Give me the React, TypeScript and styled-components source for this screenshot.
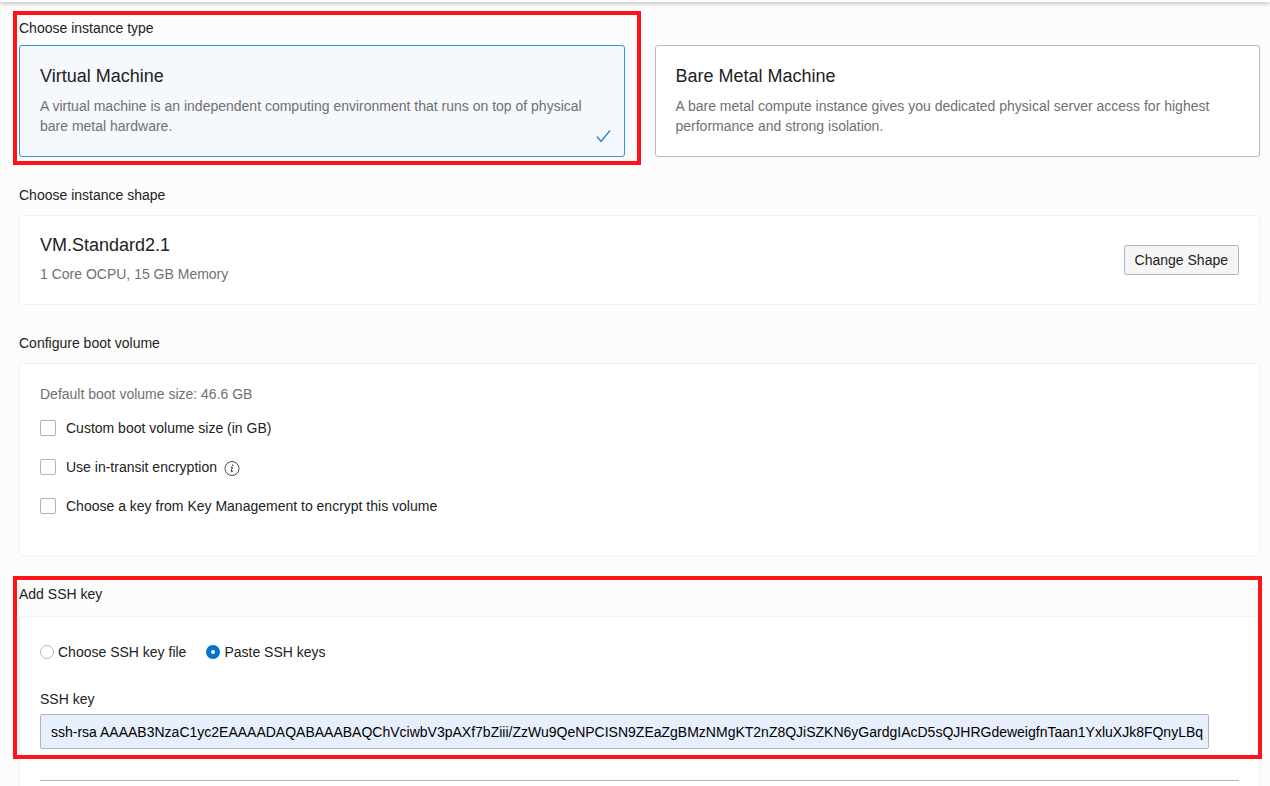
import React, { useState } from "react";
import styled, { createGlobalStyle } from "styled-components";

const GlobalStyle = createGlobalStyle`
  *, *::before, *::after { box-sizing: border-box; }
  body {
    margin: 0;
    background: #fcfcfc;
    color: #222;
    font: 14px/20px "Liberation Sans", Arial, sans-serif;
  }
`;

const Page = styled.div`
  min-height: 100vh;
  display: flex;
  flex-direction: column;
`;

const TopBar = styled.header`
  height: 2px;
  background: #fff;
  box-shadow: 0 1px 4px rgba(0, 0, 0, 0.45);
`;

const Form = styled.form`
  flex: 1;
  display: flex;
  flex-direction: column;
  gap: 28px;
  padding: 16px 10px 0 19px;
`;

const Section = styled.section<{ $grow?: boolean }>`
  position: relative;
  display: flex;
  flex-direction: column;
  flex: ${(p) => (p.$grow ? "1" : "none")};
  gap: ${(p) => (p.$grow ? 12 : 10)}px;
`;

const TypeGrid = styled.section`
  position: relative;
  display: grid;
  grid-template-columns: 1fr 1fr;
  gap: 7px 30px;
`;

const Heading = styled.h2`
  margin: 0;
  font-size: 14px;
  line-height: 20px;
  font-weight: 400;
`;

const Title = styled.span`
  display: block;
  font-size: 18px;
  line-height: 20px;
`;

const Muted = styled.span`
  display: block;
  color: #707070;
`;

const TypeCard = styled.button<{ $selected: boolean }>`
  position: relative;
  grid-row: 2;
  display: flex;
  flex-direction: column;
  gap: 10px;
  padding: 20px;
  text-align: left;
  font: inherit;
  color: inherit;
  border: 1px solid ${(p) => (p.$selected ? "#2f93e6" : "#b4b9c2")};
  border-radius: 3px;
  background: ${(p) => (p.$selected ? "#f5f8fd" : "#fff")};
`;

const Check = styled.svg`
  position: absolute;
  right: 12px;
  bottom: 13px;
`;

const highlightBorder = "4px solid #fe1318";

const TypeHighlight = styled.div`
  position: absolute;
  grid-area: 1 / 1 / 3 / 2;
  inset: -7px -16px -8px -6px;
  border: ${highlightBorder};
  pointer-events: none;
`;

const KeyHighlight = styled.div`
  position: absolute;
  inset: -8px -2px auto -6px;
  height: 183px;
  border: ${highlightBorder};
  pointer-events: none;
`;

const Panel = styled.div`
  padding: 20px;
  background: #fff;
  border: 1px solid #f2f2f2;
  border-radius: 3px;
`;

const ShapePanel = styled(Panel)`
  display: flex;
  align-items: center;
  justify-content: space-between;
  padding-top: 19px;
`;

const ShapeInfo = styled.div`
  display: flex;
  flex-direction: column;
  gap: 9px;
`;

const Button = styled.button`
  height: 30px;
  padding: 0 10px;
  font: inherit;
  color: inherit;
  background: #f5f5f5;
  border: 1px solid #b0b6c0;
  border-radius: 2px;
`;

const BootPanel = styled(Panel)`
  padding-bottom: 39px;
`;

const Options = styled.div`
  display: flex;
  flex-direction: column;
  gap: 19px;
  margin-top: 14px;
`;

const OptionRow = styled.div`
  display: flex;
  align-items: center;
  gap: 7px;
`;

const CheckLabel = styled.label`
  display: flex;
  align-items: center;
  gap: 10px;
`;

const Checkbox = styled.input`
  appearance: none;
  width: 16px;
  height: 16px;
  margin: 0;
  background: #fff;
  border: 1px solid #aeb4be;
  border-radius: 2px;
  &:checked { background: #0572ce; }
`;

const KeyPanel = styled(Panel)`
  flex: 1;
  padding: 25px 20px 5px;
  border-bottom: 0;
  border-radius: 3px 3px 0 0;
`;

const RadioRow = styled.div`
  display: flex;
  gap: 20px;
`;

const RadioLabel = styled.label`
  display: flex;
  align-items: center;
  gap: 4px;
`;

const Radio = styled.input`
  appearance: none;
  width: 14px;
  height: 14px;
  margin: 0;
  background: #fff;
  border: 1px solid #b4b9c2;
  border-radius: 50%;
  &:checked { border: 5px solid #0572ce; }
`;

const Field = styled.div`
  display: flex;
  flex-direction: column;
  gap: 5px;
  margin: 27px 30px 0 0;
`;

const KeyInput = styled.input`
  width: 100%;
  height: 35px;
  padding: 0 2px 0 10px;
  font: inherit;
  color: #000;
  background: #e8effc;
  border: 1px solid #aeb5bf;
  border-radius: 2px;
`;

const Divider = styled.hr`
  margin: 31px 0 0;
  border: 0;
  border-top: 1px solid #b0b5bd;
`;

const types = [
  {
    title: "Virtual Machine",
    text: "A virtual machine is an independent computing environment that runs on top of physical bare metal hardware.",
  },
  {
    title: "Bare Metal Machine",
    text: "A bare metal compute instance gives you dedicated physical server access for highest performance and strong isolation.",
  },
];

const bootOptions = [
  { label: "Custom boot volume size (in GB)" },
  { label: "Use in-transit encryption", info: true },
  { label: "Choose a key from Key Management to encrypt this volume" },
];

const InfoIcon = () => (
  <svg width="16" height="18" viewBox="0 0 16 18" fill="none" stroke="#333" aria-hidden="true">
    <circle cx="8" cy="10.5" r="7" strokeWidth=".9" />
    <path d="M6.8 9.3h1.6L7.3 13.2q-.1.8.6.5l.9-.5" />
    <circle cx="8.7" cy="7.2" r=".8" fill="#333" stroke="none" />
  </svg>
);

export default function App() {
  const [type, setType] = useState(0);
  const [source, setSource] = useState("paste");
  const [sshKey, setSshKey] = useState(
    "ssh-rsa AAAAB3NzaC1yc2EAAAADAQABAAABAQChVciwbV3pAXf7bZiii/ZzWu9QeNPCISN9ZEaZgBMzNMgKT2nZ8QJiSZKN6yGardgIAcD5sQJHRGdeweigfnTaan1YxluXJk8FQnyLBq"
  );

  return (
    <Page>
      <GlobalStyle />
      <TopBar />
      <Form>
        <TypeGrid>
          <Heading>Choose instance type</Heading>
          {types.map((t, i) => (
            <TypeCard key={t.title} type="button" $selected={i === type} aria-pressed={i === type} onClick={() => setType(i)}>
              <Title>{t.title}</Title>
              <Muted>{t.text}</Muted>
              {i === type && (
                <Check width="16" height="14" viewBox="0 0 16 14" fill="none" stroke="#1f85d6" strokeWidth="1.3" aria-hidden="true">
                  <path d="M1 7.5 5 12.5 14 1.5" />
                </Check>
              )}
            </TypeCard>
          ))}
          <TypeHighlight />
        </TypeGrid>

        <Section>
          <Heading>Choose instance shape</Heading>
          <ShapePanel>
            <ShapeInfo>
              <Title>VM.Standard2.1</Title>
              <Muted>1 Core OCPU, 15 GB Memory</Muted>
            </ShapeInfo>
            <Button type="button">Change Shape</Button>
          </ShapePanel>
        </Section>

        <Section>
          <Heading>Configure boot volume</Heading>
          <BootPanel>
            <Muted>Default boot volume size: 46.6 GB</Muted>
            <Options>
              {bootOptions.map((o) => (
                <OptionRow key={o.label}>
                  <CheckLabel>
                    <Checkbox type="checkbox" />
                    {o.label}
                  </CheckLabel>
                  {o.info && <InfoIcon />}
                </OptionRow>
              ))}
            </Options>
          </BootPanel>
        </Section>

        <Section $grow>
          <Heading>Add SSH key</Heading>
          <KeyPanel>
            <RadioRow>
              <RadioLabel>
                <Radio type="radio" name="source" checked={source === "file"} onChange={() => setSource("file")} />
                Choose SSH key file
              </RadioLabel>
              <RadioLabel>
                <Radio type="radio" name="source" checked={source === "paste"} onChange={() => setSource("paste")} />
                Paste SSH keys
              </RadioLabel>
            </RadioRow>
            <Field>
              <label htmlFor="ssh-key">SSH key</label>
              <KeyInput id="ssh-key" type="text" spellCheck={false} value={sshKey} onChange={(e) => setSshKey(e.target.value)} />
            </Field>
            <Divider />
          </KeyPanel>
          <KeyHighlight />
        </Section>
      </Form>
    </Page>
  );
}
